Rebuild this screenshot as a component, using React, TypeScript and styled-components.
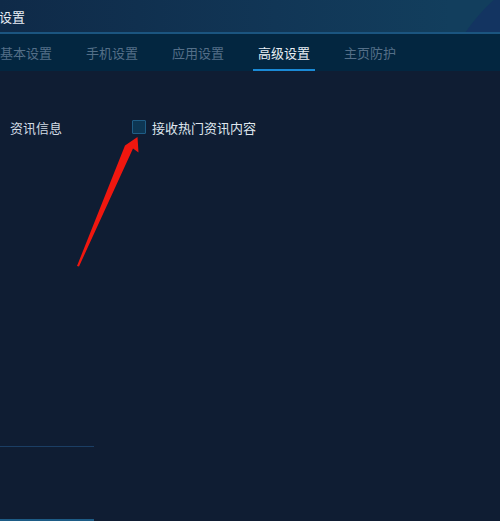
import React from "react";
import styled, { createGlobalStyle } from "styled-components";

const Global = createGlobalStyle`
  html, body { margin: 0; padding: 0; background: #0f1d33; overflow: hidden; }
  body { font-family: "Noto Sans CJK SC", "Noto Sans", sans-serif; }
  #root { width: 500px; height: 521px; }
`;

const Page = styled.div`
  position: relative;
  width: 500px;
  height: 521px;
  display: flex;
  flex-direction: column;
  background: #0f1d33;
  overflow: hidden;
`;

const Header = styled.div`
  position: relative;
  height: 32px;
  flex: none;
  display: flex;
  align-items: center;
  background: linear-gradient(90deg, #0f2a48 0%, #113656 55%, #123e5d 90%);
  border-bottom: 2px solid #1b5580;
  overflow: hidden;
`;

const HeaderShape = styled.div`
  position: absolute;
  right: -260px;
  top: -40px;
  width: 330px;
  height: 380px;
  border-radius: 50%;
  background: #133461;
`;

const Title = styled.div`
  position: relative;
  font-size: 13px;
  color: #e8eef5;
  margin-left: -1px;
  margin-top: 1px;
`;

const TabBar = styled.div`
  height: 37px;
  flex: none;
  display: flex;
  gap: 24px;
  background: #032640;
  padding-left: 0;
  margin-left: -5px;
`;

const Tab = styled.div<{ $active?: boolean }>`
  width: 62px;
  display: flex;
  align-items: center;
  justify-content: center;
  font-size: 13px;
  color: ${(p) => (p.$active ? "#e8eef4" : "#546f88")};
  box-sizing: border-box;
  border-bottom: 2px solid ${(p) => (p.$active ? "#1a8ad6" : "transparent")};
  padding-top: 1px;
`;

const Body = styled.div`
  flex: 1;
  display: flex;
  flex-direction: column;
`;

const Row = styled.div`
  display: flex;
  align-items: center;
  margin-top: 47px;
  height: 18px;
`;

const RowLabel = styled.div`
  width: 122px;
  padding-left: 10px;
  font-size: 13px;
  color: #d2dbe4;
`;

const Check = styled.div`
  width: 12px;
  height: 12px;
  border: 1px solid #1f5d85;
  background: #0d3653;
  border-radius: 1px;
  margin-right: 6px;
`;

const CheckLabel = styled.div`
  font-size: 13px;
  color: #dfe6ee;
`;

const Footer = styled.div`
  margin-top: auto;
  width: 94px;
  height: 75px;
  border-top: 1px solid #1b3e64;
  border-bottom: 2px solid #1d5c86;
  box-sizing: border-box;
`;

const Arrow = styled.svg`
  position: absolute;
  left: 0;
  top: 0;
  pointer-events: none;
`;

export default function App() {
  const tabs = ["基本设置", "手机设置", "应用设置", "高级设置", "主页防护"];
  return (
    <>
      <Global />
      <Page>
        <Header>
          <HeaderShape />
          <Title>设置</Title>
        </Header>
        <TabBar>
          {tabs.map((t, i) => (
            <Tab key={t} $active={i === 3}>
              {t}
            </Tab>
          ))}
        </TabBar>
        <Body>
          <Row>
            <RowLabel>资讯信息</RowLabel>
            <Check />
            <CheckLabel>接收热门资讯内容</CheckLabel>
          </Row>
          <Footer />
        </Body>
        <Arrow width="500" height="521" viewBox="0 0 500 521">
          <path
            d="M137.5 137 L138.5 152.5 L133 148.5 L79 266.5 L77 266 L125 145.5 Z"
            fill="#f0170f"
          />
        </Arrow>
      </Page>
    </>
  );
}
